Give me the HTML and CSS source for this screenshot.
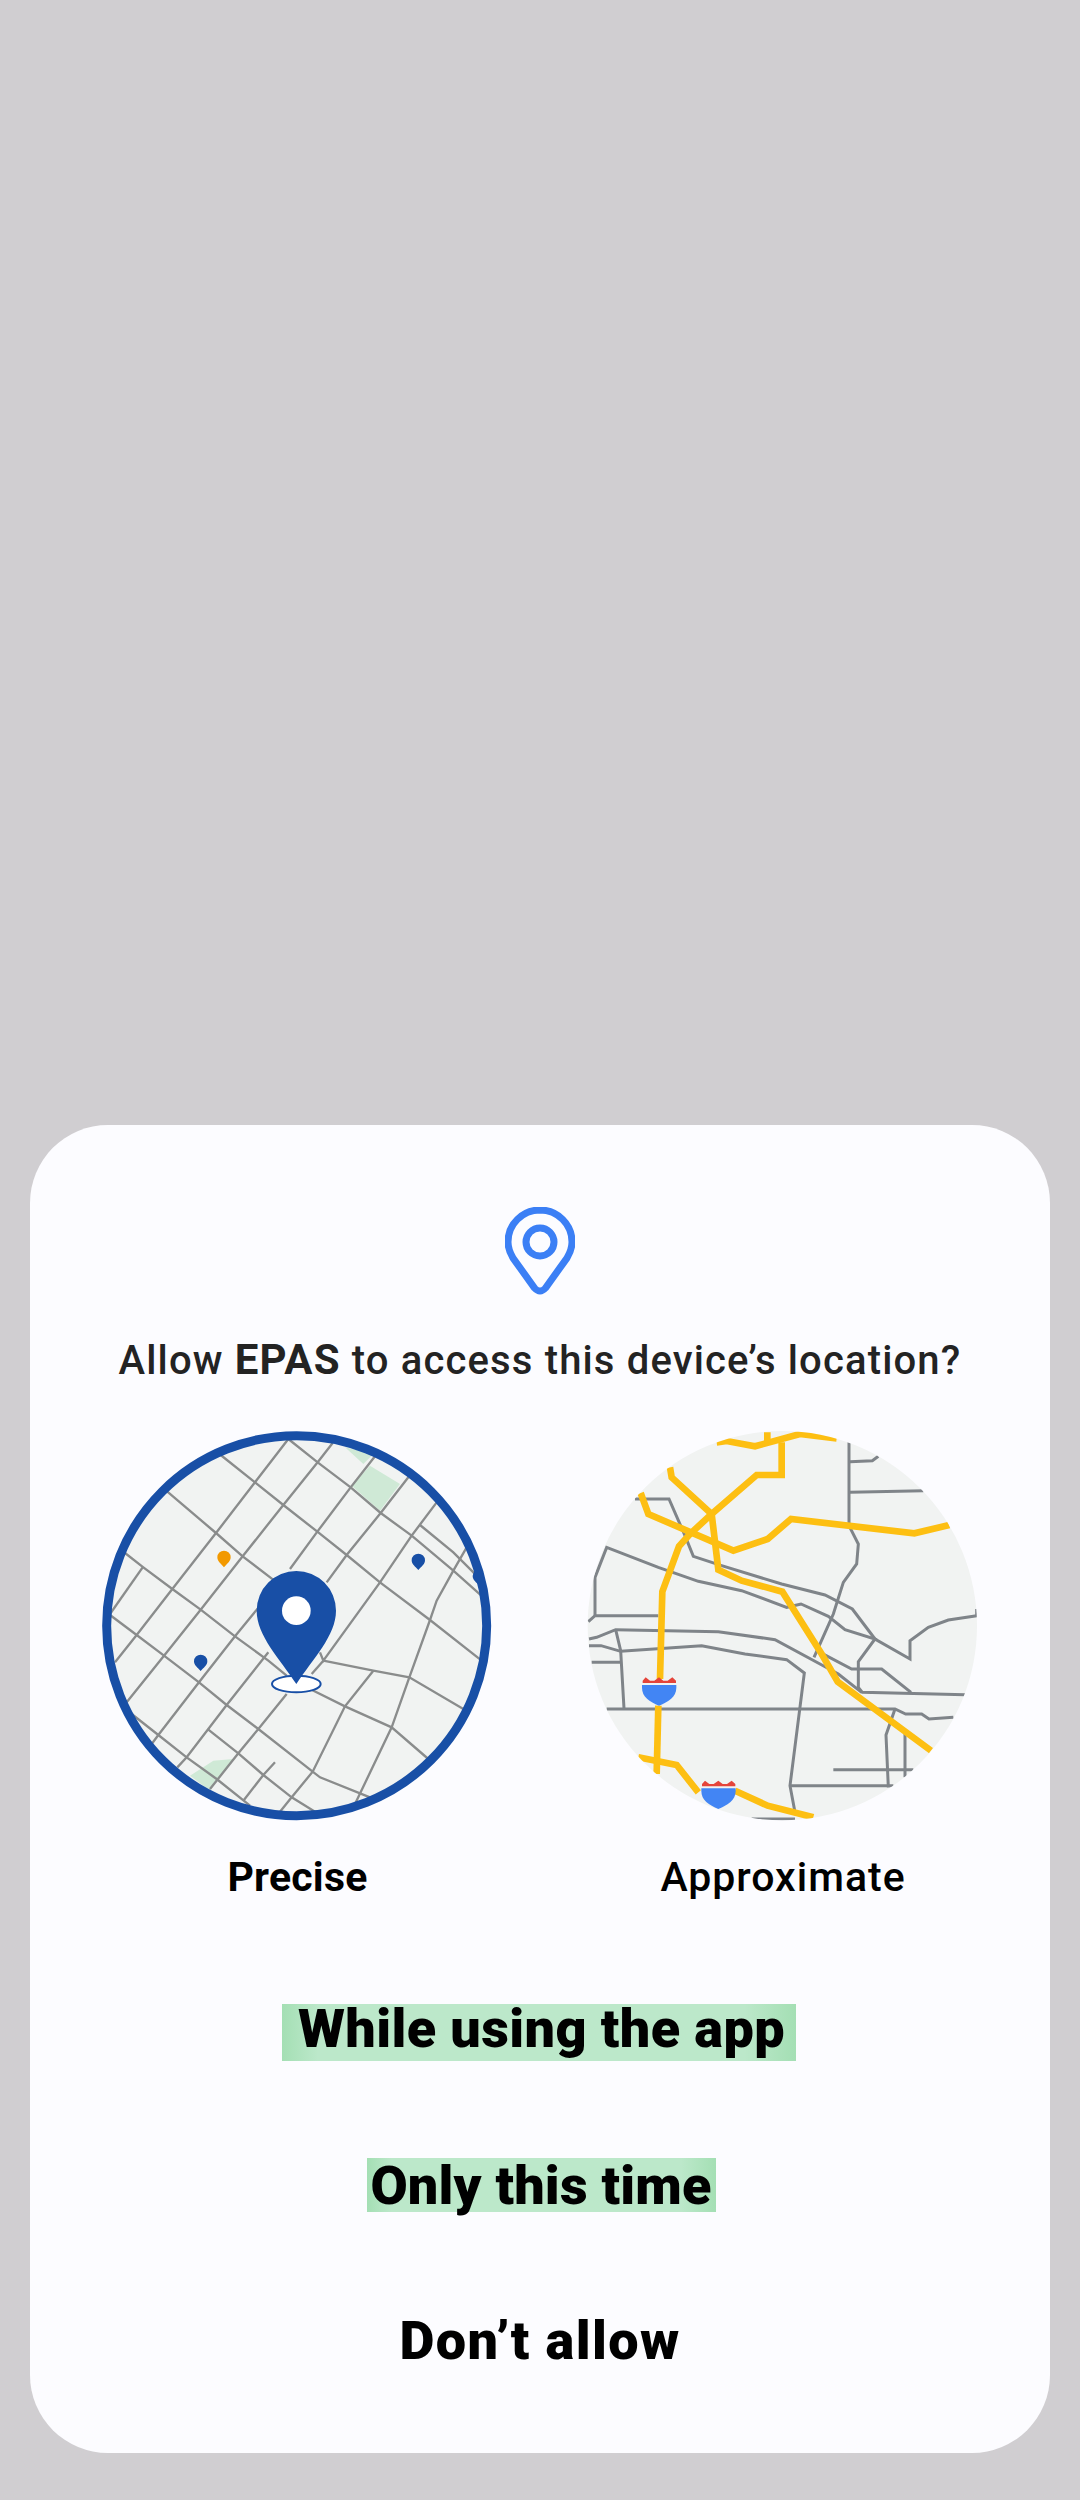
FILE: index.html
```html
<!DOCTYPE html>
<html lang="en">
<head>
<meta charset="utf-8">
<title>Location permission</title>
<link rel="stylesheet" href="styles.css">
</head>
<body>
<main class="sheet">
  <svg class="loc-icon" viewBox="0 0 70 88" aria-hidden="true">
    <path d="M35 3C17.3 3 3 17.3 3 35C3 41 5 46 8 51L29.5 81Q35 87 40.5 81L62 51C65 46 67 41 67 35C67 17.3 52.7 3 35 3Z"/>
    <circle cx="35" cy="35" r="14"/>
  </svg>
  <h1 class="title">Allow <b>EPAS</b> to access this device’s location?</h1>
  <div class="choices">
    <div class="choice">
      <svg class="map" viewBox="0 0 1230 1230" aria-hidden="true">
        <defs><clipPath id="c1"><circle cx="620" cy="620" r="572"/></clipPath></defs>
        <circle cx="620" cy="620" r="572" fill="#f1f3f2"/>
        <g clip-path="url(#c1)">
          <path class="park" d="M765 85L850 105L820 135ZM840 140L930 195L870 275L785 200ZM300 1070L370 1025L430 1020L360 1115Z"/>
          <g class="roads">
            <path d="M595 60L683 130L782 205L872 282L965 350L1090 455L1180 535"/>
            <path d="M392 108L495 190L580 258L682 338L770 408L870 490L1020 603L1175 725"/>
            <path d="M232 218L378 342L458 412L560 490"/>
            <path d="M105 402L160 445L247 510L332 572L435 652L535 725L590 770"/>
            <path d="M60 588L140 648L222 710L327 790L410 858L505 930L668 1058L690 1075L840 1135"/>
            <path d="M125 885L205 948L290 1015L380 1080L480 1160"/>
            <path d="M355 932L445 1003L520 1068L605 1135L675 1178"/>
            <path d="M990 318L1090 400L1175 485"/>
            <path d="M660 810L765 862L905 925L1015 1020"/>
            <path d="M700 725L850 755L958 775L1120 870"/>
            <path d="M60 585L158 445"/>
            <path d="M75 730L140 648L247 510L378 342L495 190L595 60"/>
            <path d="M110 850L222 710L332 572L458 412L580 258L683 130L728 72"/>
            <path d="M185 975L205 948L327 790L435 652L510 560"/>
            <path d="M600 450L682 338L782 205L855 112"/>
            <path d="M262 1045L290 1015L410 858L535 700"/>
            <path d="M710 490L770 408L872 282L955 175"/>
            <path d="M360 1110L445 1003L505 930L590 825"/>
            <path d="M690 700L700 725L870 490L965 350L1040 250"/>
            <path d="M700 725L665 765"/>
            <path d="M460 1145L520 1068L555 1030"/>
            <path d="M570 1178L605 1135L668 1058L765 862L850 755"/>
            <path d="M795 1155L905 925L958 775L1020 603L1040 545L1090 455L1130 385"/>
          </g>
          <ellipse class="halo" cx="619" cy="795" rx="73" ry="25"/>
          <path class="pin" d="M619 795C570 720 500 650 500 575A119 119 0 0 1 738 575C738 650 668 720 619 795Z"/>
          <circle class="pin-dot" cx="619" cy="575" r="43"/>
          <path class="pin-small orange" d="M402 445C393 434 382 428 382 415A20 20 0 0 1 422 415C422 428 411 434 402 445Z"/>
          <path class="pin" d="M332 756C323 745 312 740 312 727A20 20 0 0 1 352 727C352 740 341 745 332 756Z"/>
          <path class="pin" d="M985 453C976 442 965 437 965 424A20 20 0 0 1 1005 424C1005 437 994 442 985 453Z"/>
          <path class="pin" d="M1168 500C1159 489 1148 484 1148 471A20 20 0 0 1 1188 471C1188 484 1177 489 1168 500Z"/>
        </g>
        <circle class="ring" cx="620" cy="620" r="570"/>
      </svg>
      <span class="choice-label strong">Precise</span>
    </div>
    <div class="choice">
      <svg class="map" viewBox="0 0 1230 1230" aria-hidden="true">
        <defs>
          <clipPath id="c2"><circle cx="622" cy="620" r="584"/></clipPath>
          <g id="shield">
            <path class="shield-red" d="M203 792V785L212 775L225 785L238 785L252 775L265 785L278 785L292 775L303 785V792Z"/>
            <path class="shield-blue" d="M201 798H304V806C304 834 280 848 252 860C224 848 201 834 201 806Z"/>
          </g>
        </defs>
        <circle cx="622" cy="620" r="584" fill="#f1f3f2"/>
        <g clip-path="url(#c2)">
          <g class="streets">
            <path d="M822 70V320L850 375L845 435L805 490L775 585L717 715"/>
            <path d="M825 128L892 125L910 112"/>
            <path d="M825 220L1045 215"/>
            <path d="M180 240H282L330 350L355 412L440 440L620 495L750 528L832 570L900 660L1005 720V665L1060 625L1120 603L1205 590V570"/>
            <path d="M60 590V475L95 385L250 445L370 487L500 515L635 565L678 555L760 592L810 632L900 660L850 728V805L862 820L1170 827"/>
            <path d="M850 750H920L1008 820"/>
            <path d="M40 608L60 590H250"/>
            <path d="M42 660L65 655L122 632L430 638L600 662L735 735L790 765L860 820"/>
            <path d="M735 700L830 750H850"/>
            <path d="M122 632L137 695L147 868"/>
            <path d="M42 680H78L137 697L380 680L510 705L635 722L688 762L645 1100L660 1180"/>
            <path d="M50 730H137"/>
            <path d="M95 870H960L992 885H1040L1062 900L1135 895"/>
            <path d="M960 870L933 948L940 1105"/>
            <path d="M990 945V1075"/>
            <path d="M775 1052H1015"/>
            <path d="M645 1100H955"/>
            <path d="M530 1200H660"/>
          </g>
          <g class="highways">
            <path d="M425 70L455 66L540 82L675 45L785 58"/>
            <path d="M577 40V72"/>
            <path d="M620 70V168H545L410 285L345 345L312 382L262 518L255 780"/>
            <path d="M285 145L290 175L410 285L430 452L500 485L622 518L740 705L788 788L1068 995"/>
            <path d="M197 222L220 285L475 395L578 360L648 300L1018 343L1123 318"/>
            <path d="M250 860L245 1065"/>
            <path d="M190 1015L305 1038L370 1120"/>
            <path d="M480 1115L578 1160L715 1195"/>
          </g>
          <use href="#shield"/>
          <use href="#shield" x="178" y="310"/>
        </g>
      </svg>
      <span class="choice-label">Approximate</span>
    </div>
  </div>
  <div class="actions">
    <span class="action hl hl-a">While using the app</span>
    <span class="action hl hl-b">Only this time</span>
    <span class="action plain">Don’t allow</span>
  </div>
</main>
</body>
</html>
```
FILE: styles.css
```css
* { box-sizing: border-box; }
html, body { margin: 0; }
body {
  width: 1080px;
  height: 2500px;
  background: #d0ced1;
  display: flex;
  flex-direction: column;
  justify-content: flex-end;
  padding: 0 30px 47px;
  font-family: Roboto, "Liberation Sans", sans-serif;
}
.sheet {
  height: 1328px;
  background: #fcfcff;
  border-radius: 78px;
  padding-top: 82px;
  display: flex;
  flex-direction: column;
  align-items: center;
}
.loc-icon { width: 70px; height: 88px; display: block; flex: none; }
.loc-icon path, .loc-icon circle { fill: none; stroke: #3b7ff5; stroke-width: 7; }
.title {
  margin: 41px 0 0;
  height: 48px;
  font-size: 40px;
  line-height: 48px;
  font-weight: 500;
  color: #232323;
  letter-spacing: 1.15px;
  white-space: nowrap;
}
.title b { font-size: 42px; font-weight: 700; }
.choices {
  margin-top: 35px;
  width: 100%;
  display: flex;
  padding-left: 63px;
  gap: 81px;
}
.choice { width: 404px; display: flex; flex-direction: column; align-items: center; }
.map { width: 410px; height: 410px; display: block; flex: none; }
.choice-label {
  margin-top: 24px;
  padding-left: 6px;
  font-size: 41px;
  line-height: 48px;
  font-weight: 500;
  color: #000;
  letter-spacing: 1px;
}
.choice-label.strong { padding-left: 5px; font-weight: 700; letter-spacing: 0.2px; }
.park { fill: #cfe9d6; }
.roads path { fill: none; stroke: #8a8c8c; stroke-width: 7; }
.halo { fill: #fff; stroke: #184fa6; stroke-width: 6; }
.pin { fill: #184fa6; }
.pin-dot { fill: #fff; }
.orange { fill: #f29900; }
.ring { fill: none; stroke: #184fa6; stroke-width: 27; }
.streets path { fill: none; stroke: #7f8489; stroke-width: 9; }
.highways path { fill: none; stroke: #fdbf12; stroke-width: 20; }
.shield-red { fill: #e5443a; }
.shield-blue { fill: #4285f4; }
.actions {
  margin-top: 103px;
  display: flex;
  flex-direction: column;
  align-items: center;
}
.action {
  font-size: 54px;
  font-weight: 900;
  color: #000;
  white-space: nowrap;
  line-height: 56px;
}
.hl { background: linear-gradient(90deg, #a4dfb4 0, #bce8ca 7%, #bce8ca 90%, #a4dfb4 100%); }
.hl-a { padding: 0 11px 0 16px; height: 57px; line-height: 50px; letter-spacing: 0.4px; margin-right: 2px; }
.hl-b { padding: 0 4px 0 3px; height: 54px; margin-top: 97px; margin-left: 3px; letter-spacing: 0.2px; }
.plain { margin-top: 101px; letter-spacing: 1.4px; }
```
